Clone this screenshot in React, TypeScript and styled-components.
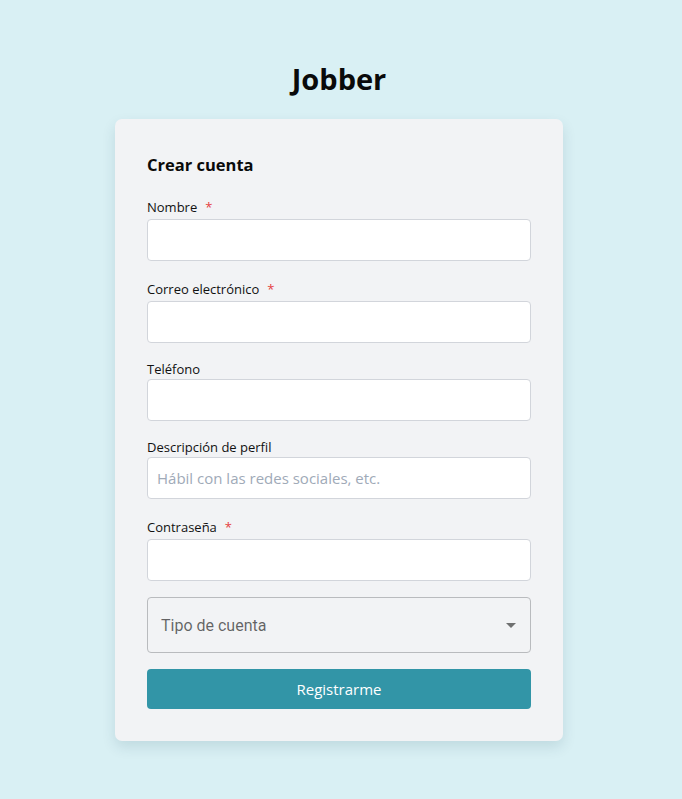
import React from 'react';
import styled, { createGlobalStyle } from 'styled-components';

const fields = [
  { id: 'nombre', label: 'Nombre', required: true, type: 'text', placeholder: '' },
  { id: 'correo', label: 'Correo electrónico', required: true, type: 'email', placeholder: '' },
  { id: 'telefono', label: 'Teléfono', required: false, type: 'tel', placeholder: '' },
  { id: 'descripcion', label: 'Descripción de perfil', required: false, type: 'text', placeholder: 'Hábil con las redes sociales, etc.' },
  { id: 'password', label: 'Contraseña', required: true, type: 'password', placeholder: '' },
];

const GlobalStyle = createGlobalStyle`
  html, body {
    margin: 0;
    padding: 0;
    background: #d9f0f4;
  }
  body {
    font-family: 'Open Sans', 'Noto Sans', sans-serif;
    color: #111;
  }
  * {
    box-sizing: border-box;
  }
`;

const App: React.FC = () => {
  return (
    <Page>
      <GlobalStyle />
      <Brand>Jobber</Brand>
      <Card>
        <Heading>Crear cuenta</Heading>
        <Form onSubmit={e => e.preventDefault()}>
          {fields.map(f => (
            <Field key={f.id}>
              <Label htmlFor={f.id} $required={f.required}>
                {f.label}
                {f.required && <Star>*</Star>}
              </Label>
              <Input id={f.id} type={f.type} placeholder={f.placeholder} />
            </Field>
          ))}
          <SelectBox>
            <SelectText>Tipo de cuenta</SelectText>
            <svg width="24" height="24" viewBox="0 0 24 24">
              <path d="M7 10l5 5 5-5z" fill="rgba(0,0,0,0.54)" />
            </svg>
          </SelectBox>
          <SubmitButton type="submit">Registrarme</SubmitButton>
        </Form>
      </Card>
    </Page>
  );
};

const Page = styled.div`
  min-height: 799px;
  display: flex;
  flex-direction: column;
  align-items: center;
  padding: 59px 4px 40px 0;
`;

const Brand = styled.h1`
  margin: 0 0 20px;
  font-size: 29px;
  line-height: 40px;
  font-weight: 700;
  color: #0a0a0a;
`;

const Card = styled.div`
  width: 448px;
  background: #f2f3f5;
  border-radius: 7px;
  padding: 32px;
  box-shadow: 0 6px 14px rgba(0, 60, 80, 0.12);
`;

const Heading = styled.h2`
  margin: 0 0 16px;
  font-size: 16.5px;
  line-height: 28px;
  font-weight: 700;
  color: #0a0a0a;
`;

const Form = styled.form`
  display: flex;
  flex-direction: column;
  gap: 16px;
`;

const Field = styled.div`
  display: flex;
  flex-direction: column;
`;

const Label = styled.label<{ $required: boolean }>`
  font-size: 13px;
  line-height: ${p => (p.$required ? '24px' : '20px')};
  color: #111;
  display: flex;
  align-items: center;
`;

const Star = styled.span`
  color: #e53e3e;
  margin-left: 8px;
  font-size: 13px;
`;

const Input = styled.input`
  height: 42px;
  width: 100%;
  border: 1px solid #d2d5db;
  border-radius: 4px;
  background: #fff;
  padding: 0 9px;
  font-family: 'Open Sans', sans-serif;
  font-size: 15px;
  color: #222;
  outline: none;

  &::placeholder {
    color: #a0aab8;
  }
`;

const SelectBox = styled.div`
  height: 56px;
  border: 1px solid #b9bbbe;
  border-radius: 4px;
  display: flex;
  align-items: center;
  justify-content: space-between;
  padding: 0 7px 0 13px;
  cursor: pointer;
`;

const SelectText = styled.span`
  font-family: Roboto, sans-serif;
  font-size: 16px;
  color: rgba(0, 0, 0, 0.6);
`;

const SubmitButton = styled.button`
  height: 40px;
  width: 100%;
  border: none;
  border-radius: 4px;
  background: #3295a7;
  color: #fff;
  font-family: 'Open Sans', sans-serif;
  font-size: 15px;
  cursor: pointer;
`;

export default App;
